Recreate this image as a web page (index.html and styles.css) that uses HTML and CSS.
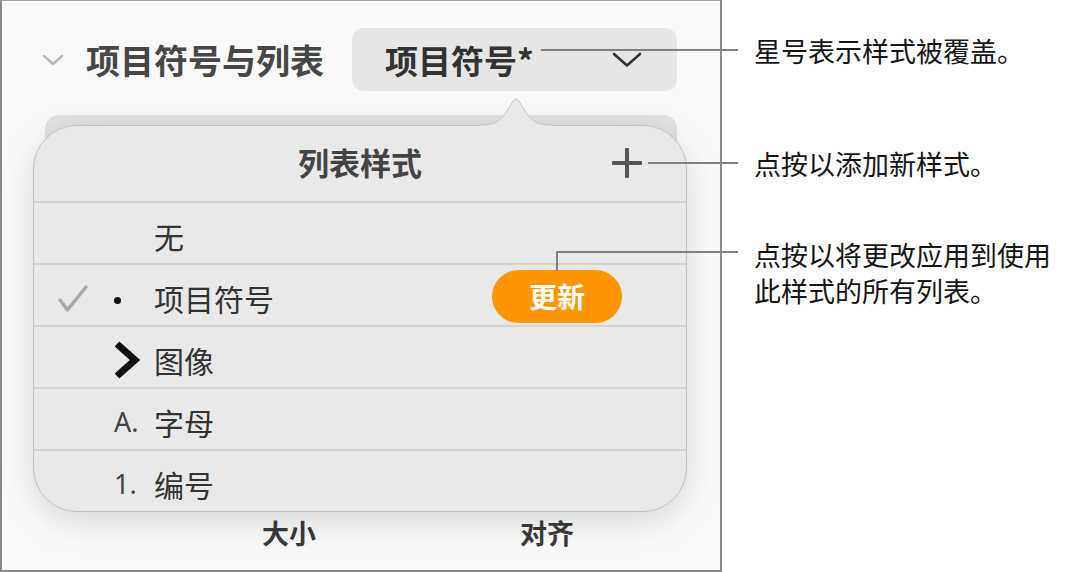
FILE: index.html
```html
<!DOCTYPE html>
<html lang="zh-CN">
<head>
<meta charset="utf-8">
<title>项目符号与列表</title>
<link rel="stylesheet" href="styles.css">
</head>
<body>
<div class="stage">
  <section class="panel">
    <div class="head">
      <svg class="disc" width="22" height="14" viewBox="0 0 22 14"><path d="M2 3 L11 11 L20 3" fill="none" stroke="#b8b8b8" stroke-width="2.4" stroke-linecap="round" stroke-linejoin="round"/></svg>
      <h1 class="title">项目符号与列表</h1>
      <div class="select">
        <span class="select-text">项目符号*</span>
        <svg width="30" height="16" viewBox="0 0 30 16"><path d="M2 2 L15 13.5 L28 2" fill="none" stroke="#333" stroke-width="2.6" stroke-linecap="round" stroke-linejoin="round"/></svg>
      </div>
    </div>

    <div class="popwrap">
      <div class="ghost"></div>
      <div class="popover">
        <svg class="arrow" width="72" height="30" viewBox="0 0 72 30">
          <path d="M0 30 L0 28 C14 28 20 25 27 14 C32 5 34 2 36 2 C38 2 40 5 45 14 C52 25 58 28 72 28 L72 30 Z" fill="#e9e9e9"/>
          <path d="M0 28 C14 28 20 25 27 14 C32 5 34 2 36 2 C38 2 40 5 45 14 C52 25 58 28 72 28" fill="none" stroke="#c2c2c2" stroke-width="1"/>
        </svg>
        <div class="pop-head">
          <span></span>
          <span class="pop-title">列表样式</span>
          <svg class="plus" width="32" height="32" viewBox="0 0 32 32"><rect x="14" y="1" width="4" height="30" rx="1" fill="#555"/><rect x="1" y="14" width="30" height="4" rx="1" fill="#555"/></svg>
        </div>
        <div class="row">
          <span class="check"></span><span class="mark"></span><span class="label">无</span>
        </div>
        <div class="row">
          <span class="check"><svg width="32" height="30" viewBox="0 0 32 30"><path d="M3 16 L10.5 26 L29 3" fill="none" stroke="#a8a8a8" stroke-width="3.4" stroke-linecap="round" stroke-linejoin="round"/></svg></span>
          <span class="mark"><span class="dot"></span></span>
          <span class="label">项目符号</span>
          <button class="update">更新</button>
        </div>
        <div class="row">
          <span class="check"></span>
          <span class="mark"><svg width="28" height="40" viewBox="0 0 28 40"><path d="M4 4 L22 20 L4 36" fill="none" stroke="#111" stroke-width="7"/></svg></span>
          <span class="label">图像</span>
        </div>
        <div class="row">
          <span class="check"></span><span class="mark latin">A.</span><span class="label">字母</span>
        </div>
        <div class="row">
          <span class="check"></span><span class="mark latin">1.</span><span class="label">编号</span>
        </div>
      </div>
    </div>

    <div class="foot">
      <span>大小</span>
      <span>对齐</span>
    </div>
  </section>

  <aside class="notes">
    <p class="note n1">星号表示样式被覆盖。</p>
    <p class="note n2">点按以添加新样式。</p>
    <p class="note n3">点按以将更改应用到使用<br>此样式的所有列表。</p>
  </aside>

  <div class="lead l1"></div>
  <div class="lead l2"></div>
  <div class="lead l3h"></div>
  <div class="lead l3v"></div>
</div>
</body>
</html>
```
FILE: styles.css
```css
* { box-sizing: border-box; }
html, body {
  margin: 0;
  padding: 0;
  background: #ffffff;
}
body {
  font-family: "Noto Sans CJK SC", "Noto Sans", sans-serif;
  color: #222;
}
.stage {
  position: relative;
  display: flex;
  width: 1077px;
  height: 572px;
  overflow: hidden;
}
.panel {
  width: 722px;
  height: 572px;
  flex: none;
  background: #f9f9f9;
  border: 2px solid #8a8a8a;
  border-top: 1px solid #a0a0a0;
  display: flex;
  flex-direction: column;
}
.head {
  display: flex;
  align-items: center;
  height: 63px;
  margin-top: 27px;
}
.disc {
  margin-left: 40px;
  flex: none;
}
.title {
  margin: 0 0 0 22px;
  font-size: 34px;
  font-weight: 700;
  color: #474747;
  line-height: 40px;
}
.select {
  margin-left: auto;
  margin-right: 43px;
  width: 325px;
  height: 63px;
  background: #e6e6e6;
  border-radius: 12px;
  display: flex;
  align-items: center;
  justify-content: space-between;
  padding: 0 35px 0 33px;
}
.select-text {
  font-size: 33px;
  font-weight: 700;
  color: #333;
  line-height: 40px;
}
.popwrap {
  position: relative;
  margin: 34px 0 0 31px;
  width: 654px;
}
.ghost {
  position: absolute;
  left: 12px;
  top: -10px;
  width: 632px;
  height: 120px;
  background: #e1e1e1;
  border-radius: 14px;
  filter: blur(0.6px);
}
.popover {
  position: relative;
  z-index: 1;
  width: 654px;
  height: 387px;
  background: #e9e9e9;
  border: 1px solid #c2c2c2;
  border-radius: 44px;
  box-shadow: 0 10px 34px rgba(0, 0, 0, 0.13);
}
.arrow {
  position: absolute;
  left: 446px;
  top: -29px;
}
.pop-head {
  height: 75px;
  display: grid;
  grid-template-columns: 1fr auto 1fr;
  align-items: center;
}
.pop-title {
  font-size: 31px;
  font-weight: 700;
  color: #444;
  padding-bottom: 4px;
}
.plus {
  justify-self: end;
  margin-right: 43px;
  margin-bottom: 2px;
}
.row {
  display: flex;
  align-items: center;
  height: 62px;
  border-top: 2px solid #d3d3d3;
  padding-left: 23px;
  padding-top: 5px;
}
.check {
  width: 56px;
  flex: none;
  display: flex;
  align-items: center;
  padding-top: 2px;
}
.mark {
  width: 41px;
  flex: none;
  display: flex;
  align-items: center;
}
.mark.latin {
  font-family: "Noto Sans", "Liberation Sans", sans-serif;
  font-size: 27px;
  color: #444;
  padding-left: 1px;
}
.dot {
  width: 7px;
  height: 7px;
  border-radius: 50%;
  background: #111;
  margin: 6px 0 0 1px;
}
.label {
  font-size: 30px;
  color: #333;
  line-height: 36px;
}
.update {
  margin-left: auto;
  margin-right: 64px;
  width: 130px;
  height: 53px;
  border: none;
  border-radius: 27px;
  background: #ff9500;
  color: #fff;
  font-family: "Noto Sans CJK SC", sans-serif;
  font-size: 28px;
  font-weight: 700;
  padding: 0;
  margin-top: -3px;
}
.foot {
  display: flex;
  margin: 4px 0 0 260px;
  gap: 204px;
  font-size: 27px;
  font-weight: 700;
  color: #3a3a3a;
  line-height: 34px;
}
.notes {
  flex: 1;
  display: flex;
  flex-direction: column;
  padding-left: 32px;
}
.note {
  margin: 0;
  font-size: 27px;
  line-height: 34px;
  color: #151515;
}
.n1 { margin-top: 34px; }
.n2 { margin-top: 79px; }
.n3 { margin-top: 56px; line-height: 36px; }
.lead {
  position: absolute;
  background: #808080;
  z-index: 5;
}
.l1 { left: 541px; top: 49px; width: 197px; height: 2px; }
.l2 { left: 648px; top: 162px; width: 90px; height: 2px; }
.l3h { left: 556px; top: 251px; width: 182px; height: 2px; }
.l3v { left: 556px; top: 251px; width: 2px; height: 20px; }
```
